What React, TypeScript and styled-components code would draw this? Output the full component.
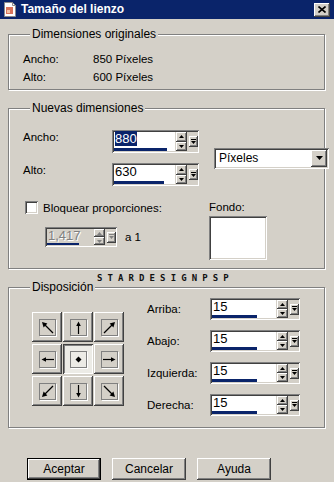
import React from "react";
import styled, { createGlobalStyle, css } from "styled-components";

const GlobalStyle = createGlobalStyle`
  html, body {
    margin: 0;
    padding: 0;
    background: #d4d0c8;
  }
  body {
    font-family: "Liberation Sans", Arial, sans-serif;
    font-size: 11px;
    color: #000;
  }
  * {
    box-sizing: border-box;
  }
`;

const raised = css`
  background: #d4d0c8;
  box-shadow:
    inset -1px -1px #404040,
    inset 1px 1px #fff,
    inset -2px -2px #808080,
    inset 2px 2px #d4d0c8;
`;

const sunken = css`
  box-shadow:
    inset 1px 1px #808080,
    inset -1px -1px #fff,
    inset 2px 2px #404040,
    inset -2px -2px #d4d0c8;
`;

const Window = styled.div`
  width: 334px;
  height: 482px;
  background: #d4d0c8;
  overflow: hidden;
  display: flex;
  flex-direction: column;
`;

const TitleBar = styled.div`
  height: 19px;
  flex-shrink: 0;
  background: #0a246a;
  display: flex;
  align-items: center;
  gap: 4px;
  padding: 0 4px 0 3px;
`;

const Title = styled.span`
  flex: 1;
  color: #fff;
  font-weight: bold;
  font-size: 12px;
  line-height: 19px;
`;

const CloseButton = styled.div`
  ${raised};
  width: 16px;
  height: 14px;
  display: flex;
  align-items: center;
  justify-content: center;
`;

const Body = styled.div`
  padding: 0 9px 0 8px;
  display: flex;
  flex-direction: column;
`;

const GroupBox = styled.div<{ $mt: number; $pad: string }>`
  margin-top: ${(p) => p.$mt}px;
  padding: ${(p) => p.$pad};
  border: 1px solid #808080;
  box-shadow:
    inset 1px 1px #fff,
    1px 1px #fff;
`;

const Caption = styled.div`
  width: fit-content;
  margin: -7px 0 0 7px;
  padding: 0 2px;
  height: 13px;
  line-height: 13px;
  font-size: 12px;
  background: #d4d0c8;
`;

const GroupContent = styled.div<{ $pt: number }>`
  padding-top: ${(p) => p.$pt}px;
`;

const InfoGrid = styled.div`
  display: grid;
  grid-template-columns: 70px 1fr;
  grid-auto-rows: 18px;
  align-items: center;
  font-size: 11.5px;
`;

const SizeGrid = styled.div`
  display: grid;
  grid-template-columns: 74px 87px 115px;
  grid-template-rows: 23px 23px;
  column-gap: 15px;
  row-gap: 10px;
`;

const FieldLabel = styled.span`
  font-size: 11.5px;
  line-height: 13px;
  padding-top: 1px;
`;

const Dropdown = styled.div`
  ${sunken};
  grid-column: 3;
  grid-row: 1 / span 2;
  align-self: center;
  height: 21px;
  background: #fff;
  padding: 2px;
  display: flex;
  align-items: stretch;
`;

const DropdownText = styled.span`
  flex: 1;
  font-size: 12px;
  line-height: 17px;
  padding-left: 3px;
`;

const DropdownButton = styled.div`
  ${raised};
  width: 16px;
  display: flex;
  align-items: center;
  justify-content: center;
`;

const LowerRow = styled.div`
  display: flex;
  margin-top: 15px;
`;

const LockColumn = styled.div`
  width: 186px;
  display: flex;
  flex-direction: column;
`;

const CheckRow = styled.label`
  display: flex;
  align-items: center;
  gap: 5px;
  margin-left: 2px;
  height: 13px;
  font-size: 11.5px;
`;

const CheckBox = styled.span`
  ${sunken};
  width: 13px;
  height: 13px;
  background: #fff;
`;

const RatioRow = styled.div`
  display: flex;
  align-items: center;
  gap: 8px;
  margin: 13px 0 0 22px;
  font-size: 11.5px;
`;

const FondoColumn = styled.div`
  display: flex;
  flex-direction: column;
  gap: 2px;
  font-size: 11.5px;
  line-height: 13px;
`;

const Swatch = styled.div`
  ${sunken};
  width: 58px;
  height: 44px;
  background: #fff;
`;

const Watermark = styled.div`
  margin: 5px 0 0 89px;
  height: 8px;
  line-height: 8px;
  font-family: "DejaVu Sans Mono", monospace;
  font-weight: bold;
  font-size: 9px;
  letter-spacing: 5.1px;
  color: #111;
`;

const LayoutRow = styled.div`
  display: flex;
  align-items: flex-start;
`;

const AnchorGrid = styled.div`
  display: grid;
  grid-template-columns: repeat(3, 30px);
  grid-template-rows: repeat(3, 30px);
  column-gap: 1px;
  row-gap: 2px;
  margin: 14px 0 0 9px;
`;

const AnchorButton = styled.div<{ $pressed?: boolean }>`
  ${(p) =>
    p.$pressed
      ? css`
          background: #ecebe6;
          box-shadow:
            inset 1px 1px #404040,
            inset -1px -1px #fff,
            inset 2px 2px #808080;
        `
      : raised};
  display: flex;
  align-items: center;
  justify-content: center;
`;

const AnchorFrame = styled.div`
  width: 17px;
  height: 17px;
  border: 1px solid #808080;
  box-shadow: 1px 1px 0 #fff;
  display: flex;
  align-items: center;
  justify-content: center;
`;

const MarginGrid = styled.div`
  display: grid;
  grid-template-columns: 63px 90px;
  grid-auto-rows: 22px;
  row-gap: 10px;
  align-items: center;
  margin-left: 23px;
`;

const ButtonRow = styled.div`
  display: flex;
  gap: 11px;
  margin-top: 30px;
  padding-left: 19px;
`;

const PushButton = styled.div<{ $default?: boolean }>`
  ${raised};
  width: 74px;
  height: 22px;
  display: flex;
  align-items: center;
  justify-content: center;
  font-size: 12px;
  ${(p) =>
    p.$default &&
    css`
      box-shadow:
        inset 0 0 0 1px #000,
        inset -2px -2px #404040,
        inset 2px 2px #fff,
        inset -3px -3px #808080;
    `}
`;

/* spin field */

const Spin = styled.div<{ $w: number; $h: number }>`
  ${sunken};
  width: ${(p) => p.$w}px;
  height: ${(p) => p.$h}px;
  padding: 2px 1px 2px 2px;
  background: #d4d0c8;
  display: flex;
  align-items: center;
`;

const SpinValue = styled.div<{ $disabled?: boolean }>`
  flex: 1;
  align-self: stretch;
  background: ${(p) => (p.$disabled ? "#d4d0c8" : "#fff")};
  display: flex;
  flex-direction: column;
  justify-content: space-between;
`;

const ValueText = styled.span<{ $disabled?: boolean }>`
  font-size: 13px;
  line-height: 14px;
  padding-left: 1px;
  color: ${(p) => (p.$disabled ? "#808080" : "#000")};
  text-shadow: ${(p) => (p.$disabled ? "1px 1px 0 #fff" : "none")};
`;

const Selection = styled.span`
  background: #0a246a;
  color: #fff;
`;

const Bar = styled.div<{ $pct: number }>`
  height: 3px;
  width: ${(p) => p.$pct}%;
  background: #0a246a;
`;

const SpinButtons = styled.div`
  align-self: stretch;
  display: flex;
  flex-direction: column;
  margin-left: 1px;
`;

const SpinButton = styled.div`
  ${raised};
  width: 11px;
  flex: 1;
  display: flex;
  align-items: center;
  justify-content: center;
`;

const PopButton = styled.div`
  ${raised};
  width: 9px;
  height: 11px;
  margin-left: 2px;
  display: flex;
  align-items: center;
  justify-content: center;
`;

function Triangle({ up, color = "#000" }: { up?: boolean; color?: string }) {
  return (
    <svg width="5" height="3" viewBox="0 0 5 3">
      <polygon points={up ? "2.5,0 5,3 0,3" : "0,0 5,0 2.5,3"} fill={color} />
    </svg>
  );
}

function PopGlyph({ color = "#000" }: { color?: string }) {
  return (
    <svg width="5" height="6" viewBox="0 0 5 6">
      <rect x="0" y="0" width="5" height="1" fill={color} />
      <polygon points="0,2 5,2 2.5,5" fill={color} />
    </svg>
  );
}

interface SpinFieldProps {
  value: string;
  pct: number;
  width: number;
  height: number;
  selected?: boolean;
  disabled?: boolean;
}

function SpinField({ value, pct, width, height, selected, disabled }: SpinFieldProps) {
  const glyph = disabled ? "#808080" : "#000";
  return (
    <Spin $w={width} $h={height}>
      <SpinValue $disabled={disabled}>
        <ValueText $disabled={disabled}>
          {selected ? <Selection>{value}</Selection> : value}
        </ValueText>
        <Bar $pct={pct} />
      </SpinValue>
      <SpinButtons>
        <SpinButton>
          <Triangle up color={glyph} />
        </SpinButton>
        <SpinButton>
          <Triangle color={glyph} />
        </SpinButton>
      </SpinButtons>
      <PopButton>
        <PopGlyph color={glyph} />
      </PopButton>
    </Spin>
  );
}

type Dir = "nw" | "n" | "ne" | "w" | "c" | "e" | "sw" | "s" | "se";

const rotation: Record<Dir, number> = {
  n: 0,
  e: 90,
  s: 180,
  w: 270,
  ne: 0,
  se: 90,
  sw: 180,
  nw: 270,
  c: 0,
};

function AnchorArrow({ dir }: { dir: Dir }) {
  if (dir === "c") {
    return (
      <svg width="15" height="15" viewBox="0 0 15 15">
        <polygon points="7.5,4.5 10.5,7.5 7.5,10.5 4.5,7.5" fill="#000" />
      </svg>
    );
  }
  const diagonal = dir.length === 2;
  return (
    <svg width="15" height="15" viewBox="0 0 15 15">
      <g transform={`rotate(${rotation[dir]} 7.5 7.5)`}>
        {diagonal ? (
          <>
            <line x1="2" y1="13" x2="10.5" y2="4.5" stroke="#000" strokeWidth="1.2" />
            <polygon points="13,2 7.6,3.6 11.4,7.4" fill="#000" />
          </>
        ) : (
          <>
            <line x1="7.5" y1="14" x2="7.5" y2="5" stroke="#000" strokeWidth="1.2" />
            <polygon points="7.5,1.5 5.2,6 9.8,6" fill="#000" />
          </>
        )}
      </g>
    </svg>
  );
}

const anchors: Dir[] = ["nw", "n", "ne", "w", "c", "e", "sw", "s", "se"];

const margins = [
  { label: "Arriba:", value: "15" },
  { label: "Abajo:", value: "15" },
  { label: "Izquierda:", value: "15" },
  { label: "Derecha:", value: "15" },
];

function CanvasIcon() {
  return (
    <svg width="14" height="15" viewBox="0 0 14 15">
      <path d="M1.5 0.5h8l3 3v11h-11z" fill="#fff" stroke="#8a8a8a" />
      <path d="M9.5 0.5v3h3" fill="none" stroke="#8a8a8a" />
      <rect x="3" y="5" width="7" height="7" fill="#d9735a" />
      <rect x="4" y="8" width="3" height="3" fill="#f3c3a6" />
    </svg>
  );
}

export default function App() {
  return (
    <>
      <GlobalStyle />
      <Window>
        <TitleBar>
          <CanvasIcon />
          <Title>Tamaño del lienzo</Title>
          <CloseButton>
            <svg width="8" height="7" viewBox="0 0 8 7">
              <path d="M0.5 0.5l7 6M7.5 0.5l-7 6" stroke="#000" strokeWidth="1.6" />
            </svg>
          </CloseButton>
        </TitleBar>

        <Body>
          <GroupBox $mt={15} $pad="0 0 3px 14px">
            <Caption>Dimensiones originales</Caption>
            <GroupContent $pt={9}>
              <InfoGrid>
                <span>Ancho:</span>
                <span>850 Píxeles</span>
                <span>Alto:</span>
                <span>600 Píxeles</span>
              </InfoGrid>
            </GroupContent>
          </GroupBox>

          <GroupBox $mt={18} $pad="0 0 8px 14px">
            <Caption>Nuevas dimensiones</Caption>
            <GroupContent $pt={15}>
              <SizeGrid>
                <FieldLabel>Ancho:</FieldLabel>
                <SpinField value="880" pct={87} width={87} height={23} selected />
                <Dropdown>
                  <DropdownText>Píxeles</DropdownText>
                  <DropdownButton>
                    <svg width="7" height="4" viewBox="0 0 7 4">
                      <polygon points="0,0 7,0 3.5,4" fill="#000" />
                    </svg>
                  </DropdownButton>
                </Dropdown>
                <FieldLabel>Alto:</FieldLabel>
                <SpinField value="630" pct={82} width={87} height={23} />
              </SizeGrid>
              <LowerRow>
                <LockColumn>
                  <CheckRow>
                    <CheckBox />
                    Bloquear proporciones:
                  </CheckRow>
                  <RatioRow>
                    <SpinField value="1,417" pct={70} width={72} height={20} disabled />
                    <span>a 1</span>
                  </RatioRow>
                </LockColumn>
                <FondoColumn>
                  <span>Fondo:</span>
                  <Swatch />
                </FondoColumn>
              </LowerRow>
            </GroupContent>
          </GroupBox>

          <Watermark>STARDESIGNPSP</Watermark>

          <GroupBox $mt={5} $pad="0 0 11px 14px">
            <Caption>Disposición</Caption>
            <GroupContent $pt={4}>
              <LayoutRow>
                <AnchorGrid>
                  {anchors.map((dir) => (
                    <AnchorButton key={dir} $pressed={dir === "c"}>
                      <AnchorFrame>
                        <AnchorArrow dir={dir} />
                      </AnchorFrame>
                    </AnchorButton>
                  ))}
                </AnchorGrid>
                <MarginGrid>
                  {margins.map((m) => (
                    <React.Fragment key={m.label}>
                      <FieldLabel>{m.label}</FieldLabel>
                      <SpinField value={m.value} pct={70} width={90} height={22} />
                    </React.Fragment>
                  ))}
                </MarginGrid>
              </LayoutRow>
            </GroupContent>
          </GroupBox>

          <ButtonRow>
            <PushButton $default>Aceptar</PushButton>
            <PushButton>Cancelar</PushButton>
            <PushButton>Ayuda</PushButton>
          </ButtonRow>
        </Body>
      </Window>
    </>
  );
}
